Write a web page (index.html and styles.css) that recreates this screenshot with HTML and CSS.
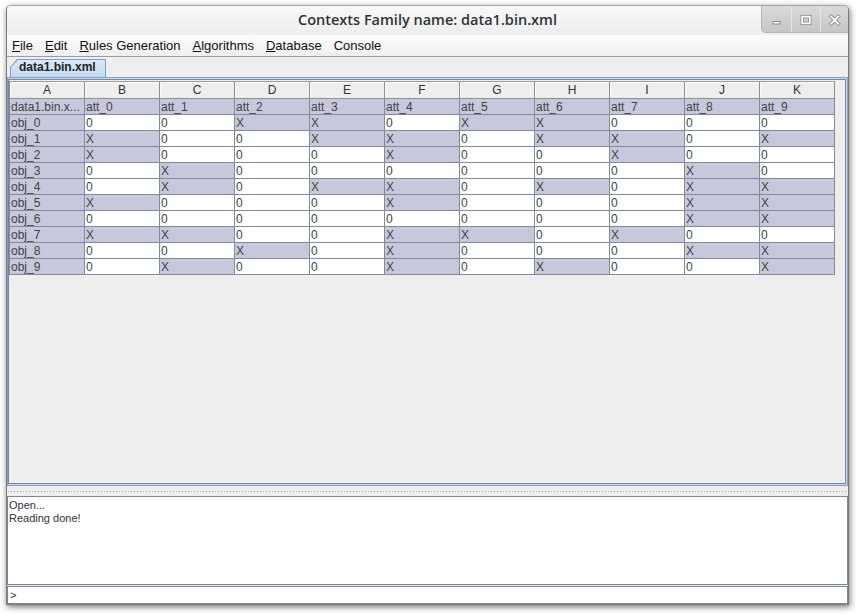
FILE: index.html
```html
<!DOCTYPE html>
<html>
<head>
<meta charset="utf-8">
<title>Contexts Family</title>
<link rel="stylesheet" href="styles.css">
</head>
<body>
<div class="window">
  <div class="titlebar">
    <div class="tb-spacer"></div>
    <div class="title">Contexts Family name: data1.bin.xml</div>
    <div class="tb-buttons">
      <div class="tb-btn">
        <svg width="29" height="27" viewBox="0 0 29 27"><rect x="11" y="15.5" width="7" height="2.5" fill="#ffffff" stroke="#8a8a8a" stroke-width="1"/></svg>
      </div>
      <div class="tb-btn">
        <svg width="29" height="27" viewBox="0 0 29 27"><rect x="10.5" y="10.5" width="8" height="7" fill="none" stroke="#8a8a8a" stroke-width="3.5"/><rect x="10.5" y="10.5" width="8" height="7" fill="none" stroke="#ffffff" stroke-width="1.8"/></svg>
      </div>
      <div class="tb-btn">
        <svg width="29" height="27" viewBox="0 0 29 27"><path d="M10.5 10.5 L18 18 M18 10.5 L10.5 18" stroke="#8a8a8a" stroke-width="3.6" stroke-linecap="square" fill="none"/><path d="M10.5 10.5 L18 18 M18 10.5 L10.5 18" stroke="#ffffff" stroke-width="1.8" stroke-linecap="square" fill="none"/></svg>
      </div>
    </div>
  </div>
  <div class="menubar">
    <span class="menu"><u>F</u>ile</span>
    <span class="menu"><u>E</u>dit</span>
    <span class="menu"><u>R</u>ules Generation</span>
    <span class="menu"><u>A</u>lgorithms</span>
    <span class="menu"><u>D</u>atabase</span>
    <span class="menu">Console</span>
  </div>
  <div class="tabstrip">
    <div class="tab"><div class="tab-inner">data1.bin.xml</div></div>
  </div>
  <div class="tabpanel">
    <div class="scroll">
      <div class="grid">
        <div class="h">A</div><div class="h">B</div><div class="h">C</div><div class="h">D</div><div class="h">E</div><div class="h">F</div><div class="h">G</div><div class="h">H</div><div class="h">I</div><div class="h">J</div><div class="h">K</div>

        <div class="c x">data1.bin.x...</div><div class="c x">att_0</div><div class="c x">att_1</div><div class="c x">att_2</div><div class="c x">att_3</div><div class="c x">att_4</div><div class="c x">att_5</div><div class="c x">att_6</div><div class="c x">att_7</div><div class="c x">att_8</div><div class="c x">att_9</div>

        <div class="c x">obj_0</div><div class="c">0</div><div class="c">0</div><div class="c x">X</div><div class="c x">X</div><div class="c">0</div><div class="c x">X</div><div class="c x">X</div><div class="c">0</div><div class="c">0</div><div class="c">0</div>

        <div class="c x">obj_1</div><div class="c x">X</div><div class="c">0</div><div class="c">0</div><div class="c x">X</div><div class="c x">X</div><div class="c">0</div><div class="c x">X</div><div class="c x">X</div><div class="c">0</div><div class="c x">X</div>

        <div class="c x">obj_2</div><div class="c x">X</div><div class="c">0</div><div class="c">0</div><div class="c">0</div><div class="c x">X</div><div class="c">0</div><div class="c">0</div><div class="c x">X</div><div class="c">0</div><div class="c">0</div>

        <div class="c x">obj_3</div><div class="c">0</div><div class="c x">X</div><div class="c">0</div><div class="c">0</div><div class="c">0</div><div class="c">0</div><div class="c">0</div><div class="c">0</div><div class="c x">X</div><div class="c">0</div>

        <div class="c x">obj_4</div><div class="c">0</div><div class="c x">X</div><div class="c">0</div><div class="c x">X</div><div class="c x">X</div><div class="c">0</div><div class="c x">X</div><div class="c">0</div><div class="c x">X</div><div class="c x">X</div>

        <div class="c x">obj_5</div><div class="c x">X</div><div class="c">0</div><div class="c">0</div><div class="c">0</div><div class="c x">X</div><div class="c">0</div><div class="c">0</div><div class="c">0</div><div class="c x">X</div><div class="c x">X</div>

        <div class="c x">obj_6</div><div class="c">0</div><div class="c">0</div><div class="c">0</div><div class="c">0</div><div class="c">0</div><div class="c">0</div><div class="c">0</div><div class="c">0</div><div class="c x">X</div><div class="c x">X</div>

        <div class="c x">obj_7</div><div class="c x">X</div><div class="c x">X</div><div class="c">0</div><div class="c">0</div><div class="c x">X</div><div class="c x">X</div><div class="c">0</div><div class="c x">X</div><div class="c">0</div><div class="c">0</div>

        <div class="c x">obj_8</div><div class="c">0</div><div class="c">0</div><div class="c x">X</div><div class="c">0</div><div class="c x">X</div><div class="c">0</div><div class="c">0</div><div class="c">0</div><div class="c x">X</div><div class="c x">X</div>

        <div class="c x">obj_9</div><div class="c">0</div><div class="c x">X</div><div class="c">0</div><div class="c">0</div><div class="c x">X</div><div class="c">0</div><div class="c x">X</div><div class="c">0</div><div class="c">0</div><div class="c x">X</div>
      </div>
    </div>
  </div>
  <div class="splitter"></div>
  <div class="console">Open...<br>Reading done!</div>
  <div class="input">&gt;</div>
</div>
</body>
</html>
```
FILE: styles.css
```css
* {
  box-sizing: border-box;
}

html, body {
  margin: 0;
  padding: 0;
  background: #ffffff;
}

body {
  width: 859px;
  height: 614px;
  overflow: hidden;
  font-family: "Liberation Sans", Arial, sans-serif;
}

.window {
  margin: 5px 0 0 6px;
  width: 843px;
  height: 600px;
  display: flex;
  flex-direction: column;
  background: #eeeeee;
  border: 1px solid #7c7c7c;
  border-top-color: #a8a8a8;
  border-radius: 5px 5px 0 0;
  box-shadow: 1px 2px 6px rgba(0, 0, 0, 0.55);
  overflow: hidden;
}

.titlebar {
  height: 29px;
  flex: none;
  display: grid;
  grid-template-columns: 87px 1fr 87px;
  background: linear-gradient(#f8f8f8, #ededed);
}

.title {
  text-align: center;
  font-family: "Open Sans", "DejaVu Sans", sans-serif;
  font-size: 14.5px;
  font-weight: 600;
  line-height: 28px;
  color: #2e3436;
  white-space: nowrap;
}

.tb-buttons {
  display: flex;
  height: 27px;
  background: linear-gradient(#dadada, #c6c6c6);
  border-left: 1px solid #b4b4b4;
  border-bottom: 1px solid #b8b8b8;
  border-bottom-left-radius: 5px;
}

.tb-btn {
  width: 29px;
  height: 26px;
  border-left: 1px solid #e6e6e6;
  display: flex;
  align-items: center;
  justify-content: center;
}

.tb-btn:first-child {
  border-left: none;
}

.tb-btn svg {
  display: block;
}

.menubar {
  height: 22px;
  flex: none;
  display: flex;
  background: linear-gradient(#fbfbfb, #efefef);
  border-bottom: 1px solid #9e9e9e;
  font-size: 13px;
  line-height: 21px;
  color: #111111;
}

.menu {
  padding: 0 6px;
  white-space: nowrap;
}

.menu:first-child {
  padding-left: 5px;
}

.menu u {
  text-underline-offset: 1px;
}

.tabstrip {
  height: 20px;
  flex: none;
  padding: 2px 0 0 3px;
}

.tab {
  width: 96px;
  height: 18px;
  padding: 1px 1px 0 1px;
  background: #7f9fcd;
  clip-path: polygon(0 8px, 7px 0, 100% 0, 100% 100%, 0 100%);
}

.tab-inner {
  height: 17px;
  padding-left: 8px;
  background: linear-gradient(#dae8f7, #c4d9f1);
  clip-path: polygon(0 7px, 7px 0, 100% 0, 100% 100%, 0 100%);
  font-size: 12px;
  font-weight: bold;
  line-height: 15px;
  color: #222222;
  white-space: nowrap;
}

.tabpanel {
  flex: 1;
  min-height: 0;
  display: flex;
  border: 1px solid #7f9fcd;
  background: #c9d9ee;
  padding: 1px 1px 1px 0;
}

.scroll {
  flex: 1;
  border: 1px solid #7b8796;
  background: #eeeeee;
  padding-top: 1px;
}

.grid {
  display: grid;
  grid-template-columns: repeat(11, 75px);
  width: 826px;
  border-left: 1px solid #7f8c9b;
  border-top: 1px solid #9a9a9a;
  font-size: 12px;
}

.h {
  height: 17px;
  background: #eeeeee;
  border-right: 1px solid #8f8f8f;
  border-bottom: 1px solid #8f8f8f;
  box-shadow: inset 1px 1px 0 #fafafa;
  text-align: center;
  line-height: 16px;
  color: #333333;
}

.c {
  height: 16px;
  background: #ffffff;
  border-right: 1px solid #7f8c9b;
  border-bottom: 1px solid #7f8c9b;
  padding-left: 1px;
  line-height: 16px;
  color: #444444;
  white-space: nowrap;
  overflow: hidden;
}

.c.x {
  background: #c8c8dc;
}

.splitter {
  height: 10px;
  flex: none;
  background-color: #eeeeee;
  background-image: linear-gradient(to right, #a6a6a6 1px, transparent 1px);
  background-size: 3px 1px;
  background-repeat: repeat-x;
  background-position: 1px 5px;
}

.console {
  height: 89px;
  flex: none;
  background: #ffffff;
  border: 1px solid #7b8796;
  padding: 2px 1px;
  font-size: 11px;
  line-height: 13px;
  color: #333333;
}

.input {
  height: 18px;
  flex: none;
  margin-top: 1px;
  background: #ffffff;
  border: 1px solid #7b8796;
  padding-left: 2px;
  font-size: 11px;
  line-height: 16px;
  color: #333333;
}
```
